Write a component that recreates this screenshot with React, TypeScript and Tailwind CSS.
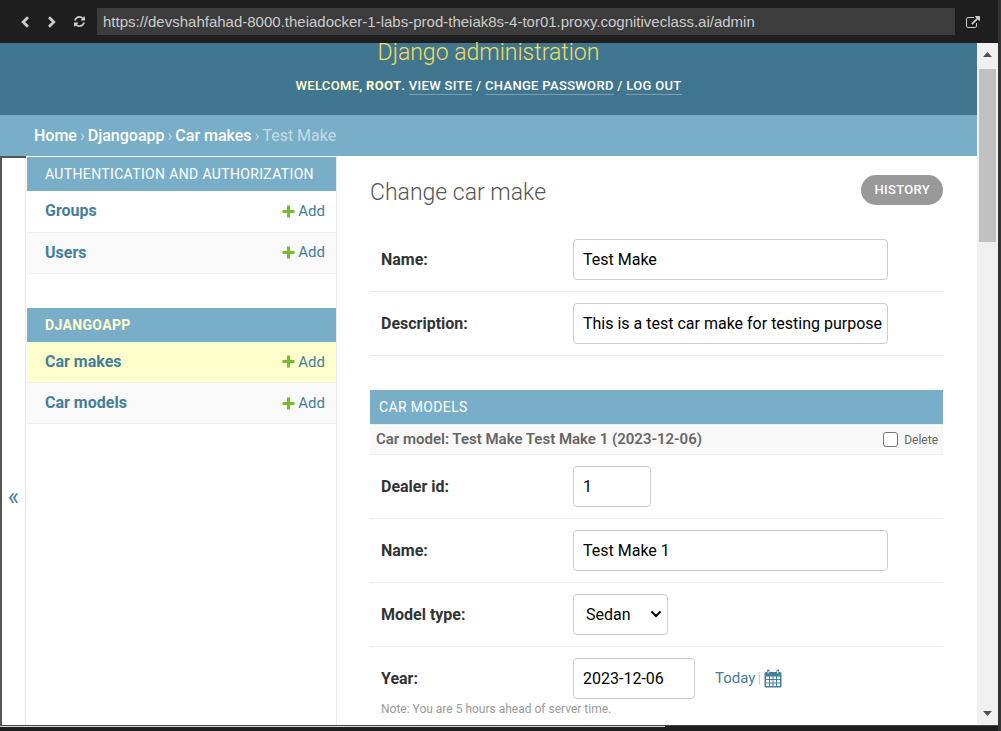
import type { ReactNode } from "react";

function ChevronLeftIcon() {
  return (
    <svg viewBox="0 0 10 12" className="h-[12px] w-[10px]" fill="none" stroke="currentColor" strokeWidth="2.800" aria-hidden="true">
      <path d="M8 1.200L3.200 6 8 10.800" />
    </svg>
  );
}

function ChevronRightIcon() {
  return (
    <svg viewBox="0 0 10 12" className="h-[12px] w-[10px]" fill="none" stroke="currentColor" strokeWidth="2.800" aria-hidden="true">
      <path d="M2 1.200L6.800 6 2 10.800" />
    </svg>
  );
}

function RefreshIcon() {
  return (
    <svg viewBox="0 0 1536 1536" className="size-[11px]" fill="currentColor" aria-hidden="true">
      <path d="M1511 928q0 5-1 7-64 268-268 434.500T764 1536q-146 0-282.500-55T238 1324l-129 129q-19 19-45 19t-45-19-19-45V960q0-26 19-45t45-19h448q26 0 45 19t19 45-19 45l-137 137q71 66 161 102t187 36q134 0 250-65t186-179q11-17 53-117 8-23 30-23h192q13 0 22.500 9.500t9.500 22.500zm25-800v448q0 26-19 45t-45 19h-448q-26 0-45-19t-19-45 19-45l138-138Q969 256 768 256q-134 0-250 65T332 500q-11 17-53 117-8 23-30 23H50q-13 0-22.500-9.500T18 608v-7q65-268 270-434.500T768 0q146 0 284 55.500T1297 212l130-129q19-19 45-19t45 19 19 45z" />
    </svg>
  );
}

function ExternalIcon() {
  return (
    <svg viewBox="0 0 1792 1536" className="h-[12px] w-[14px]" fill="currentColor" aria-hidden="true">
      <path d="M1408 928v320q0 119-84.500 203.500T1120 1536H288q-119 0-203.500-84.500T0 1248V416q0-119 84.500-203.500T288 128h704q14 0 23 9t9 23v64q0 14-9 23t-23 9H288q-66 0-113 47t-47 113v832q0 66 47 113t113 47h832q66 0 113-47t47-113V928q0-14 9-23t23-9h64q14 0 23 9t9 23zm384-864v512q0 26-19 45t-45 19-45-19l-176-176-652 652q-10 10-23 10t-23-10L695 983q-10-10-10-23t10-23l652-652-176-176q-19-19-19-45t19-45 45-19h512q26 0 45 19t19 45z" />
    </svg>
  );
}

function PlusIcon() {
  return (
    <svg viewBox="0 0 13 13" className="size-[13px]" aria-hidden="true">
      <path d="M5 0.500h3V5h4.500v3H8v4.500H5V8H0.500V5H5z" fill="#70bf2b" />
    </svg>
  );
}

function CalendarIcon() {
  return (
    <svg viewBox="0 0 18 19" className="h-[19px] w-[18px]" aria-hidden="true">
      <path
        fill="#447e9b"
        d="M2 3h1V1.500Q3 .5 4.200.500T5.500 1.500V3h7V1.500Q12.500.5 13.800.500T15 1.500V3h1q1.500 0 1.500 1.500V17q0 1.500-1.500 1.500H2Q.5 18.500.5 17V4.500Q.5 3 2 3z"
      />
      <path
        fill="#fff"
        d="M2 7.500h3V10H2zM6 7.500h2.500V10H6zM9.500 7.500H12V10H9.500zM13 7.500h3V10h-3zM2 11h3v2.500H2zM6 11h2.500v2.500H6zM9.500 11H12v2.500H9.500zM13 11h3v2.500h-3zM2 14.500h3V17H2zM6 14.500h2.500V17H6zM9.500 14.500H12V17H9.500zM13 14.500h3V17h-3z"
      />
      <path stroke="#fff" strokeWidth="1" d="M4.200 2v2.500M13.800 2v2.500" />
    </svg>
  );
}

function Toolbar() {
  return (
    <div className="flex h-[43px] shrink-0 items-center bg-[#1e1e1e] text-[#ccc]">
      <div className="flex w-[97px] items-center gap-[17px] pl-5">
        <button type="button" aria-label="Back">
          <ChevronLeftIcon />
        </button>
        <button type="button" aria-label="Forward">
          <ChevronRightIcon />
        </button>
        <button type="button" aria-label="Reload">
          <RefreshIcon />
        </button>
      </div>
      <input
        type="text"
        aria-label="Address"
        defaultValue="https://devshahfahad-8000.theiadocker-1-labs-prod-theiak8s-4-tor01.proxy.cognitiveclass.ai/admin"
        className="h-[27px] min-w-0 flex-1 bg-[#3c3c3c] px-[6px] font-['Liberation_Sans',sans-serif] text-[15px] outline-none"
      />
      <button type="button" aria-label="Open in new tab" className="mr-[18px] ml-[11px]">
        <ExternalIcon />
      </button>
    </div>
  );
}

function ToolLink({ children }: { children: ReactNode }) {
  return (
    <a href="#" className="inline-block border-b border-[#7a9fb2] text-white">
      {children}
    </a>
  );
}

function Header() {
  return (
    <header className="h-[72px] bg-[#417690] text-center text-[#ffc]">
      <h1 className="h-[34px] text-[23px] leading-[20px] font-light text-[#f5dd5d]">Django administration</h1>
      <div className="text-[13px] leading-[17px] font-medium tracking-wide uppercase">
        Welcome, <strong className="font-bold">root</strong>. <ToolLink>View site</ToolLink> /{" "}
        <ToolLink>Change password</ToolLink> / <ToolLink>Log out</ToolLink>
      </div>
    </header>
  );
}

function Breadcrumbs() {
  return (
    <nav aria-label="Breadcrumbs" className="flex h-[41px] items-center gap-[3px] bg-[#79aec8] pl-[34px] text-[16px] text-[#c4dce8]">
      <a href="#" className="font-medium text-white">Home</a>
      <span>›</span>
      <a href="#" className="font-medium text-white">Djangoapp</a>
      <span>›</span>
      <a href="#" className="font-medium text-white">Car makes</a>
      <span>›</span>
      <span>Test Make</span>
    </nav>
  );
}

type Model = { name: string; row: string };

function AppModule({ title, titleClass, models }: { title: string; titleClass: string; models: Model[] }) {
  return (
    <table className="mb-[34px] w-full">
      <caption className="h-[34px] bg-[#79aec8] pl-[18px] text-left text-[14px] leading-[34px] uppercase">
        <a href="#" className={titleClass}>{title}</a>
      </caption>
      <tbody>
        {models.map((m) => (
          <tr key={m.name} className={m.row}>
            <th scope="row" className="h-[41px] border-b border-[#eee] pl-[18px] text-left text-[16px] font-bold text-[#447e9b]">
              <a href="#">{m.name}</a>
            </th>
            <td className="border-b border-[#eee] pr-[11px]">
              <a href="#" className="flex items-center justify-end gap-[3px] text-[15px] text-[#447e9b]">
                <PlusIcon />
                Add
              </a>
            </td>
          </tr>
        ))}
      </tbody>
    </table>
  );
}

function Sidebar() {
  return (
    <nav aria-label="Sidebar" className="w-[311px] shrink-0 border-r border-[#eaeaea] pt-px pl-px">
      <AppModule
        title="Authentication and Authorization"
        titleClass="tracking-wide text-white"
        models={[
          { name: "Groups", row: "bg-white" },
          { name: "Users", row: "bg-[#f9f9f9]" },
        ]}
      />
      <AppModule
        title="Djangoapp"
        titleClass="font-bold tracking-wide text-[#ffc]"
        models={[
          { name: "Car makes", row: "bg-[#ffc]" },
          { name: "Car models", row: "bg-[#f9f9f9]" },
        ]}
      />
    </nav>
  );
}

const control = "h-[41px] rounded-[4px] border border-[#ccc] bg-white text-[16px] text-black";

function FormRow({ id, label, children }: { id: string; label: string; children: ReactNode }) {
  return (
    <div className="border-b border-[#eee] py-[11px] pl-[11px]">
      <div className="flex items-center">
        <label htmlFor={id} className="w-[192px] shrink-0 text-[16px] font-bold text-[#333]">{label}</label>
        {children}
      </div>
    </div>
  );
}

function Content() {
  return (
    <main className="min-w-0 flex-1 pr-[34px] pl-[33px]">
      <div className="mb-[17px] flex items-start justify-between pt-[19px]">
        <h2 className="text-[23px] leading-[36px] font-light text-[#555]">Change car make</h2>
        <a href="#" className="rounded-full bg-[#999] px-[13px] text-[13px] leading-[30px] font-medium tracking-wide text-white uppercase">
          History
        </a>
      </div>
      <form>
        <div className="mb-[34px]">
          <FormRow id="name" label="Name:">
            <input id="name" type="text" defaultValue="Test Make" className={`${control} w-[315px] pr-1 pl-[9px]`} />
          </FormRow>
          <FormRow id="description" label="Description:">
            <input id="description" type="text" defaultValue="This is a test car make for testing purpose" className={`${control} w-[315px] pr-1 pl-[9px]`} />
          </FormRow>
        </div>
        <h2 className="h-[34px] bg-[#79aec8] pl-[9px] text-[14px] leading-[34px] tracking-wide text-white uppercase">Car models</h2>
        <div className="flex h-[31px] items-center justify-between border-y border-[#eee] bg-[#f8f8f8] pr-[5px] pl-[6px] text-[#666]">
          <h3 className="text-[15px] font-semibold">Car model: Test Make Test Make 1 (2023-12-06)</h3>
          <label className="flex items-center gap-[6px] text-[12px]">
            <input type="checkbox" className="size-[15px] appearance-none rounded-[3px] border border-[#767676] bg-white" />
            Delete
          </label>
        </div>
        <FormRow id="dealer" label="Dealer id:">
          <input id="dealer" type="text" defaultValue="1" className={`${control} w-[78px] pr-1 pl-[9px]`} />
        </FormRow>
        <FormRow id="model-name" label="Name:">
          <input id="model-name" type="text" defaultValue="Test Make 1" className={`${control} w-[315px] pr-1 pl-[9px]`} />
        </FormRow>
        <FormRow id="type" label="Model type:">
          <div className="relative">
            <select id="type" className={`${control} w-[95px] appearance-none pl-3`} defaultValue="Sedan">
              <option>Sedan</option>
            </select>
            <svg
              viewBox="0 0 12 8"
              className="pointer-events-none absolute top-4 right-[6px] h-[8px] w-[12px]"
              fill="none"
              stroke="#000"
              strokeWidth="2"
              aria-hidden="true"
            >
              <path d="M1.500 1.500L6 6l4.500-4.500" />
            </svg>
          </div>
        </FormRow>
        <div className="py-[11px] pl-[11px]">
          <div className="flex items-center">
            <label htmlFor="year" className="w-[192px] shrink-0 text-[16px] font-bold text-[#333]">Year:</label>
            <input id="year" type="text" defaultValue="2023-12-06" className={`${control} w-[122px] pr-1 pl-[9px]`} />
            <a href="#" className="ml-5 text-[15px] text-[#447e9b]">Today</a>
            <span className="mx-1 h-[13px] w-px bg-[#ccd3e0]" />
            <button type="button" aria-label="Choose a date">
              <CalendarIcon />
            </button>
          </div>
          <p className="text-[12px] leading-[20px] text-[#999]">Note: You are 5 hours ahead of server time.</p>
        </div>
      </form>
    </main>
  );
}

function Scrollbar() {
  return (
    <div className="flex w-[21px] shrink-0 flex-col items-center bg-[#f0f0f0]">
      <svg viewBox="0 0 17 26" className="h-[26px] w-[17px]" aria-hidden="true">
        <path d="M4 14l4.500-5 4.500 5z" fill="#505050" />
      </svg>
      <div className="h-[173px] w-[17px] bg-[#c1c1c1]" />
      <svg viewBox="0 0 17 26" className="mt-auto h-[26px] w-[17px]" aria-hidden="true">
        <path d="M4 12l4.500 5 4.500-5z" fill="#505050" />
      </svg>
    </div>
  );
}

export default function App() {
  return (
    <div className="flex h-screen flex-col overflow-hidden border-r-[3px] border-[#333] bg-[#1e1e1e] font-[Roboto,sans-serif]">
      <Toolbar />
      <div className="flex min-h-0 flex-1 bg-white">
        <div className="flex min-w-0 flex-1 flex-col">
          <Header />
          <Breadcrumbs />
          <div className="flex min-h-0 flex-1 overflow-hidden">
            <div className="flex w-[26px] shrink-0 flex-col border-t-2 border-l-2 border-[#555]">
              <button
                type="button"
                aria-label="Toggle navigation"
                className="flex-1 border-r border-[#eaeaea] pt-[110px] text-[24px] text-[#447e9b]"
              >
                «
              </button>
            </div>
            <Sidebar />
            <Content />
          </div>
        </div>
        <Scrollbar />
      </div>
      <div className="h-[6px] shrink-0 border-t border-[#444]">
        <div className="h-px w-2/3 bg-[#ddd]" />
      </div>
    </div>
  );
}
